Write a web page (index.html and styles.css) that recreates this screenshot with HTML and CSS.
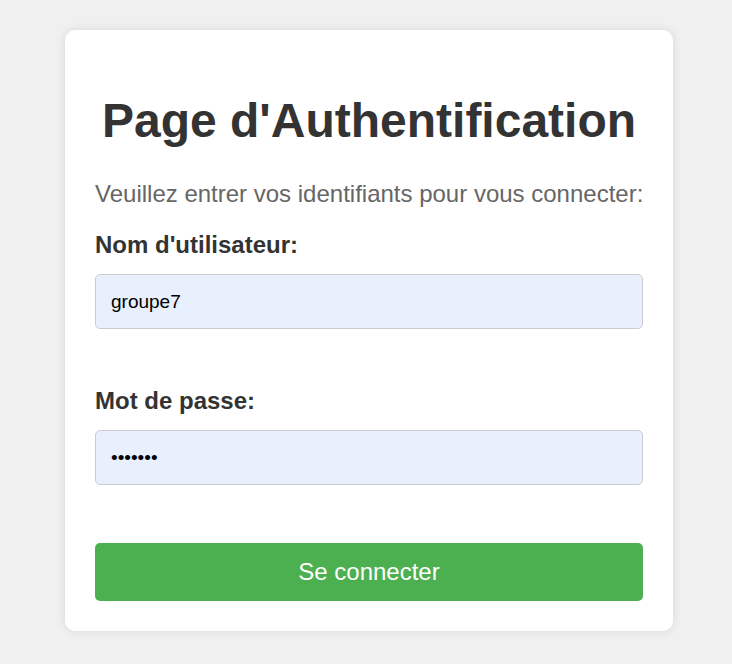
FILE: index.html
```html
<!DOCTYPE html>
<html lang="fr">
<head>
<meta charset="utf-8">
<title>Page d'Authentification</title>
<link rel="stylesheet" href="styles.css">
</head>
<body>
  <div class="login-card">
    <h1 class="login-title">Page d'Authentification</h1>
    <p class="login-intro">Veuillez entrer vos identifiants pour vous connecter:</p>
    <form class="login-form">
      <div class="field">
        <label class="field-label" for="username">Nom d'utilisateur:</label>
        <input class="field-input" id="username" type="text" value="groupe7">
      </div>
      <div class="field">
        <label class="field-label" for="password">Mot de passe:</label>
        <input class="field-input" id="password" type="password" value="groupe7">
      </div>
      <button class="submit-btn" type="button">Se connecter</button>
    </form>
  </div>
</body>
</html>
```

FILE: styles.css
```css
html, body {
  margin: 0;
  padding: 0;
}

body {
  background: #f0f0f0;
  font-family: "Liberation Sans", Arial, sans-serif;
  padding-top: 30px;
  height: 664px;
  box-sizing: border-box;
}

.login-card {
  width: 548px;
  margin: 0 0 0 65px;
  padding: 30px;
  background: #ffffff;
  border-radius: 10px;
  box-shadow: 0 0 10px rgba(0, 0, 0, 0.1);
}

.login-title {
  margin: 33px 0 32px;
  font-size: 48px;
  font-weight: bold;
  color: #333333;
  text-align: center;
  line-height: 55px;
}

.login-intro {
  margin: 0 0 24px;
  font-size: 24px;
  line-height: 27px;
  color: #666666;
  white-space: nowrap;
}

.login-form {
  margin: 0;
}

.field {
  margin-bottom: 58px;
}

.field-label {
  display: block;
  font-size: 24px;
  line-height: 27px;
  font-weight: bold;
  color: #333333;
  margin-bottom: 16px;
}

.field-input {
  display: block;
  box-sizing: border-box;
  width: 100%;
  height: 55px;
  margin: 0;
  padding: 1px 15px 0;
  font-family: "Liberation Sans", Arial, sans-serif;
  font-size: 19px;
  color: #000000;
  background: #e8f0fe;
  border: 1px solid #cccccc;
  border-radius: 5px;
  outline: none;
}

.submit-btn {
  display: block;
  width: 100%;
  height: 58px;
  margin: 0;
  padding: 0;
  font-family: "Liberation Sans", Arial, sans-serif;
  font-size: 24px;
  color: #ffffff;
  background: #4caf50;
  border: none;
  border-radius: 5px;
  cursor: pointer;
}
```
